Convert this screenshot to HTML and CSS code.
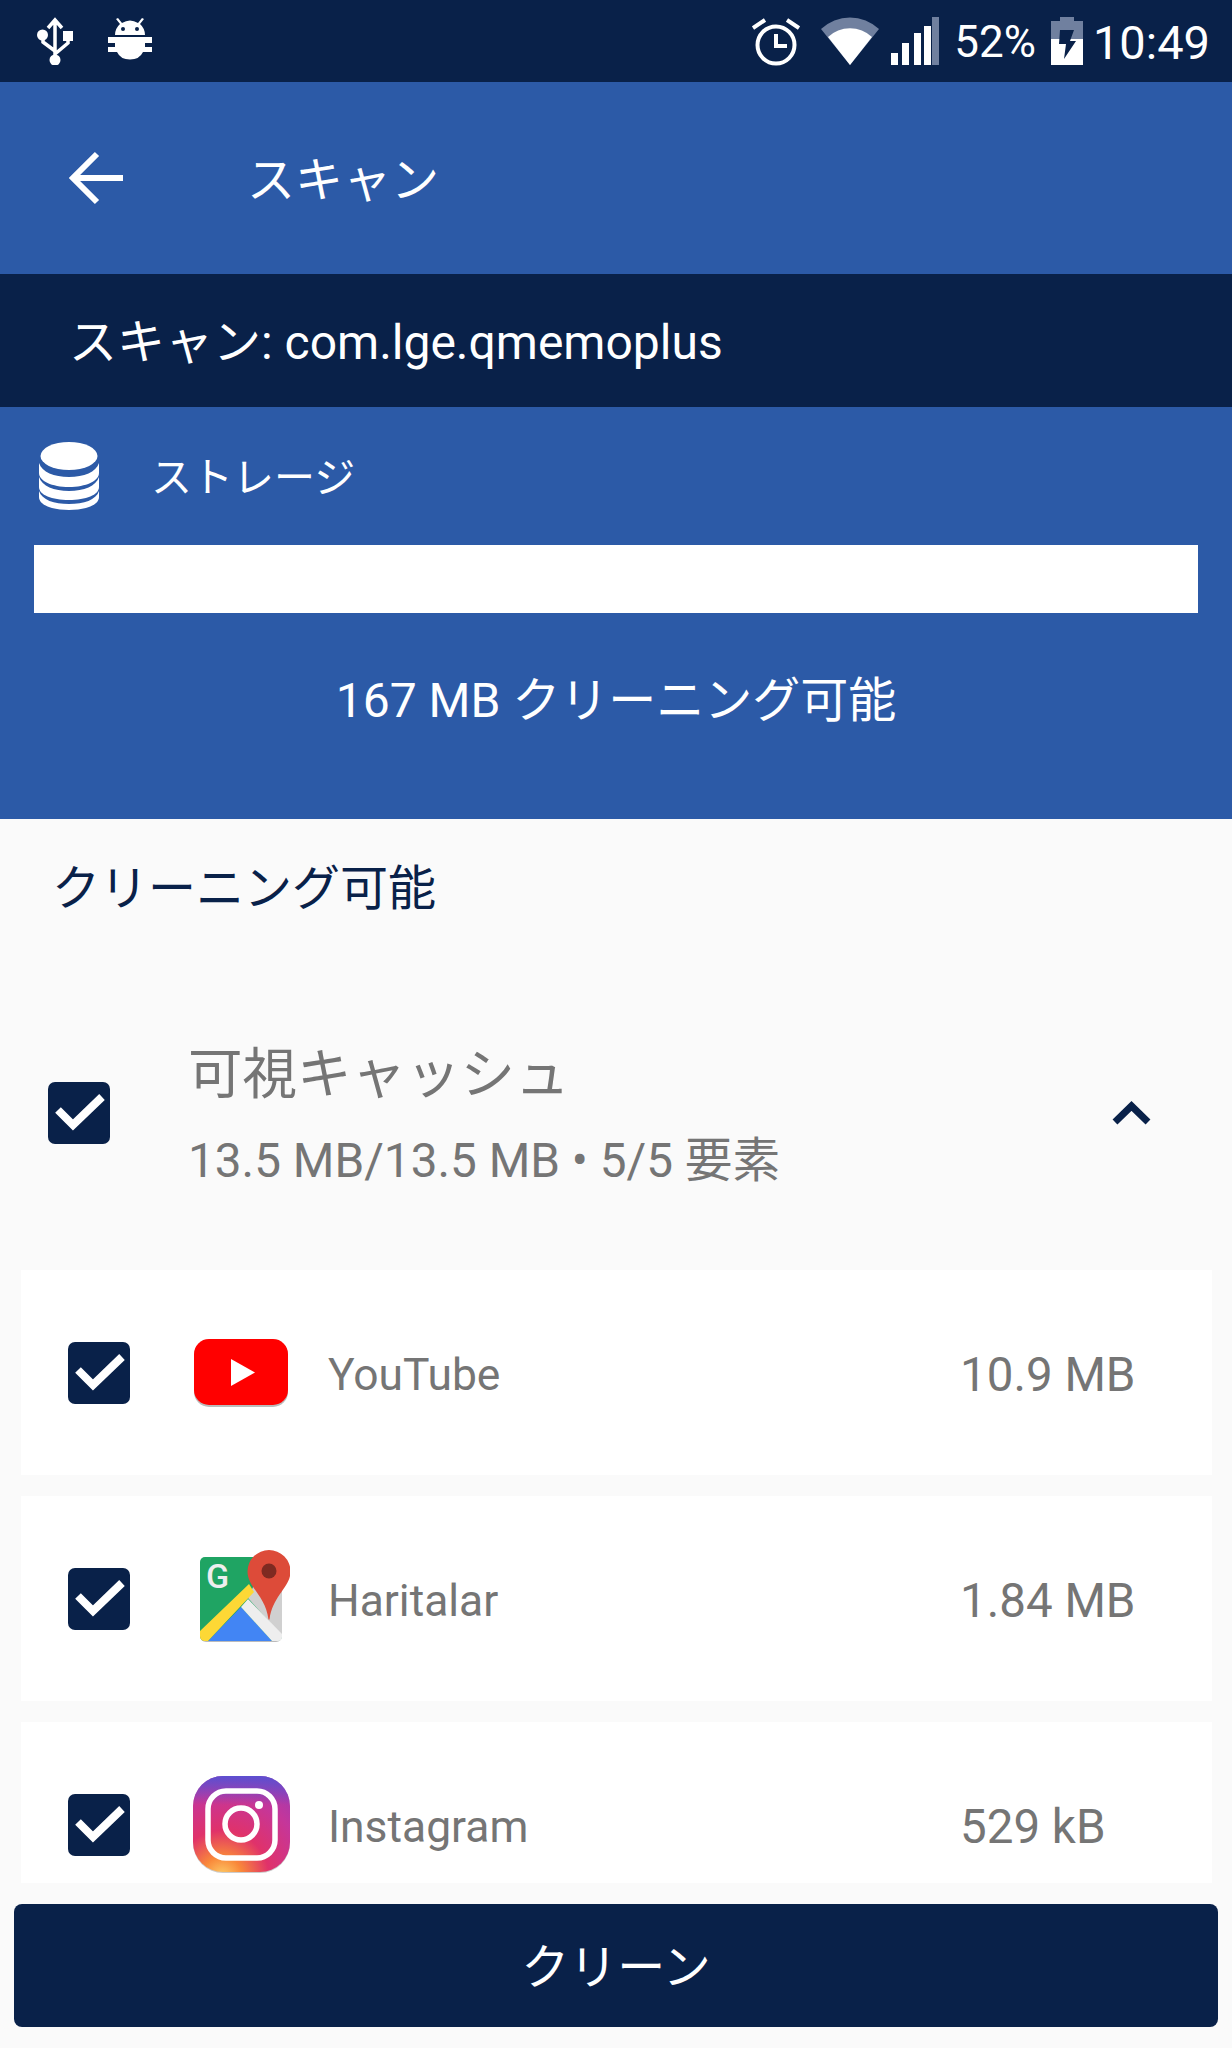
FILE: index.html
```html
<html>
<head>
<meta name="viewport" content="width=device-width, initial-scale=1">
<link rel="stylesheet" href="styles.css">
</head>
<body>
<div class="status-bar">
  <svg class="ic-usb" viewBox="0 0 36 48"><g fill="none" stroke="#fff" stroke-width="3.5"><path d="M18 4v38M11 11l7-8 7 8M6 20v5l12 9M31 22v4l-13 11"/></g><g fill="#fff"><circle cx="5.500" cy="18" r="5.500"/><rect x="26" y="14" width="10" height="10"/><circle cx="18" cy="43" r="5.500"/></g></svg>
  <svg class="ic-bug" viewBox="0 0 44 46"><g fill="#fff"><path d="M7 17a15 15 0 0 1 5-11l-4-5 2-1 4 5a15 15 0 0 1 16 0l4-5 2 1-4 5a15 15 0 0 1 5 11z"/><path d="M0 19h44v6h-7v4h7v5h-9a14 12 0 0 1-26 0h-9v-5h7v-4h-7z"/></g><circle cx="15" cy="11" r="2" fill="#092149"/><circle cx="29" cy="11" r="2" fill="#092149"/></svg>
  <div class="status-right">
    <svg class="ic-alarm" viewBox="0 0 48 49"><circle cx="24" cy="28" r="18.500" fill="none" stroke="#fff" stroke-width="4"/><path d="M24 17v12h11M1 11l12-8M47 11l-12-8" fill="none" stroke="#fff" stroke-width="4"/></svg>
    <svg class="ic-wifi" viewBox="0 0 58 48"><path d="M0 12a42 42 0 0 1 58 0l-29 36z" fill="#70809f"/><path d="M7 20a32 32 0 0 1 44 0l-22 28z" fill="#fff"/></svg>
    <svg class="ic-signal" viewBox="0 0 49 48"><path d="M0 36h7v12h-7zM11 26h7v22h-7zM23 16h7v32h-7zM33 9h7v39h-7z" fill="#fff"/><path d="M41 0h7v48h-7z" fill="#70809f"/></svg>
    <span class="pct">52%</span>
    <svg class="ic-batt" viewBox="0 0 32 48"><path d="M9 0h14v4h9v44h-32v-44h9z" fill="#70809f"/><path d="M0 22h32v26h-32z" fill="#fff"/><path d="M9 13h14l-4 11h6l-12 18 2-15h-7z" fill="#092149"/></svg>
    <span class="clock">10:49</span>
  </div>
</div>

<div class="app-bar">
  <svg class="ic-back" viewBox="0 0 54 54"><path d="M54 27h-49M28 3l-24 24 24 24" fill="none" stroke="#fff" stroke-width="6"/></svg>
  <span class="app-title">スキャン</span>
</div>

<div class="scan-band">スキャン: com.lge.qmemoplus</div>

<div class="storage">
  <div class="storage-head">
    <svg class="ic-db" viewBox="0 0 60 68"><g fill="#fff"><ellipse cx="30" cy="14" rx="28.500" ry="14"/><path d="M0 21v10c0 8 13 14 30 14s30-6 30-14v-10c-3 9-15 14-30 14s-27-5-30-14z"/><path d="M0 35v10c0 8 13 13 30 13s30-5 30-13v-10c-3 9-15 14-30 14s-27-5-30-14z"/><path d="M0 49v6c0 8 13 13 30 13s30-5 30-13v-6c-3 9-15 13-30 13s-27-4-30-13z"/></g></svg>
    <span class="storage-label">ストレージ</span>
  </div>
  <div class="storage-bar"></div>
  <div class="storage-text">167 MB クリーニング可能</div>
</div>

<div class="content">
  <div class="content-title">クリーニング可能</div>
  <div class="group">
    <svg class="check" viewBox="0 0 62 62"><rect width="62" height="62" rx="7" fill="#092149"/><path d="M10 28l15 15 29-28" fill="none" stroke="#fff" stroke-width="8"/></svg>
    <div class="group-text">
      <div class="group-name">可視キャッシュ</div>
      <div class="group-sub">13.5 MB/13.5 MB • 5/5 要素</div>
    </div>
    <svg class="ic-chevron" viewBox="0 0 39 24"><path d="M3 21l16.500-16 16.500 16" fill="none" stroke="#092149" stroke-width="7"/></svg>
  </div>

  <div class="rows">
    <div class="row">
      <svg class="check" viewBox="0 0 62 62"><rect width="62" height="62" rx="7" fill="#092149"/><path d="M10 28l15 15 29-28" fill="none" stroke="#fff" stroke-width="8"/></svg>
      <svg class="app-icon" viewBox="0 0 97 97"><rect x="1" y="16" width="94" height="67" rx="15" fill="#bbb"/><rect x="1" y="15" width="94" height="66" rx="15" fill="#f00"/><path d="M38 35l24 13.500-24 13.500z" fill="#fff"/></svg>
      <span class="row-name">YouTube</span>
      <span class="row-size">10.9 MB</span>
    </div>
    <div class="row">
      <svg class="check" viewBox="0 0 62 62"><rect width="62" height="62" rx="7" fill="#092149"/><path d="M10 28l15 15 29-28" fill="none" stroke="#fff" stroke-width="8"/></svg>
      <svg class="app-icon" viewBox="0 0 97 97">
        <rect x="7" y="8" width="82" height="84" rx="6" fill="#bbb"/>
        <rect x="7" y="7" width="82" height="84" rx="5" fill="#1fa463"/>
        <path d="M89 35v51l-34-38 6-13z" fill="#d0d0d0"/>
        <path d="M48 57l-33 34h64z" fill="#4285f4"/>
        <path d="M48 57l7-8 34 35v3a4 4 0 0 1-4 4h-6z" fill="#eee"/>
        <path d="M7 81l49-47 5 8-46 49h-4a5 5 0 0 1-4-5z" fill="#fdd835"/>
        <text class="map-g" x="13" y="38">G</text>
        <path d="M76 0a21.500 21.500 0 0 1 21.500 21.500c0 16-18 24-21 48h-1c-3-24-21-32-21-48a21.500 21.500 0 0 1 21.500-21.500z" fill="#dd4b39"/>
        <circle cx="76" cy="21" r="7.500" fill="#7e2a21"/>
      </svg>
      <span class="row-name">Haritalar</span>
      <span class="row-size">1.84 MB</span>
    </div>
    <div class="row">
      <svg class="check" viewBox="0 0 62 62"><rect width="62" height="62" rx="7" fill="#092149"/><path d="M10 28l15 15 29-28" fill="none" stroke="#fff" stroke-width="8"/></svg>
      <svg class="app-icon" viewBox="0 0 97 97">
        <defs>
          <radialGradient id="ig1" cx="0.3" cy="1.05" r="1.150">
            <stop offset="0" stop-color="#fdd06a"/>
            <stop offset="0.18" stop-color="#f9883a"/>
            <stop offset="0.42" stop-color="#e0326a"/>
            <stop offset="0.75" stop-color="#c5369a"/>
            <stop offset="1" stop-color="#a03bb0"/>
          </radialGradient>
          <linearGradient id="ig2" x1="0" y1="0" x2="0" y2="1">
            <stop offset="0" stop-color="#5c4fd0"/>
            <stop offset="0.3" stop-color="#5c4fd0" stop-opacity="0"/>
          </linearGradient>
        </defs>
        <rect x="0" y="1" width="97" height="96" rx="30" fill="#ccc"/>
        <rect x="0" y="0" width="97" height="96" rx="30" fill="url(#ig1)"/>
        <rect x="0" y="0" width="97" height="96" rx="30" fill="url(#ig2)"/>
        <rect x="15" y="15" width="67" height="67" rx="18" fill="none" stroke="#fff" stroke-width="5.5"/>
        <circle cx="48" cy="48" r="16" fill="none" stroke="#fff" stroke-width="5.5"/>
        <circle cx="66" cy="29" r="4" fill="#fff"/>
      </svg>
      <span class="row-name">Instagram</span>
      <span class="row-size">529 kB</span>
    </div>
  </div>
</div>

<div class="footer">
  <button class="clean-btn">クリーン</button>
</div>
</body>
</html>
```

FILE: styles.css
```css
* {
  box-sizing: border-box;
}

body {
  margin: 0;
  height: 2048px;
  overflow: hidden;
  display: flex;
  flex-direction: column;
  background-color: #fafafa;
  font-family: Roboto, "Noto Sans CJK JP", sans-serif;
}

svg {
  display: block;
  flex-shrink: 0;
}

.status-bar {
  height: 82px;
  display: flex;
  align-items: center;
  padding-left: 37px;
  background-color: #092149;
  color: #fff;
}

.ic-usb {
  width: 36px;
  height: 48px;
}

.ic-bug {
  width: 44px;
  height: 46px;
  margin-left: 35px;
}

.status-right {
  margin-left: auto;
  padding-right: 22px;
  display: flex;
  align-items: center;
}

.ic-alarm {
  width: 48px;
  height: 49px;
}

.ic-wifi {
  width: 58px;
  height: 48px;
  margin-left: 21px;
}

.ic-signal {
  width: 49px;
  height: 48px;
  margin-left: 12px;
}

.pct {
  font-size: 44px;
  margin-left: 14px;
  padding-top: 2px;
}

.ic-batt {
  width: 32px;
  height: 48px;
  margin-left: 15px;
}

.clock {
  font-size: 47px;
  margin-left: 10px;
  padding-top: 3px;
}

.app-bar {
  height: 192px;
  display: flex;
  align-items: center;
  padding: 0 0 0 69px;
  background-color: #2c5aa7;
  color: #fff;
}

.ic-back {
  width: 54px;
  height: 54px;
}

.app-title {
  font-size: 48px;
  margin: 0 0 5px 124px;
}

.scan-band {
  height: 133px;
  display: flex;
  align-items: center;
  padding: 0 0 5px 69px;
  background-color: #092149;
  color: #fff;
  font-size: 48px;
}

.storage {
  height: 412px;
  padding: 35px 34px 0;
  background-color: #2c5aa7;
  color: #fff;
}

.storage-head {
  height: 68px;
  display: flex;
  align-items: center;
  padding-left: 5px;
}

.ic-db {
  width: 60px;
  height: 68px;
}

.storage-label {
  font-size: 41px;
  margin: 0 0 5px 52px;
}

.storage-bar {
  height: 68px;
  margin-top: 35px;
  background-color: #fff;
}

.storage-text {
  margin-top: 48px;
  text-align: center;
  font-size: 48px;
}

.content {
  flex: 1;
  min-height: 0;
  overflow: hidden;
  display: flex;
  flex-direction: column;
}

.content-title {
  padding: 30px 0 0 52px;
  font-size: 48px;
  color: #092149;
}

.group {
  display: flex;
  align-items: center;
  margin-top: 110px;
  padding: 0 81px 0 48px;
}

.group-text {
  margin: 1px 0 6px 78px;
}

.group-name {
  font-size: 54.5px;
  color: #757575;
}

.group-sub {
  margin-top: 13px;
  font-size: 47.7px;
  color: #757575;
}

.ic-chevron {
  width: 39px;
  height: 24px;
  margin-left: auto;
}

.check {
  width: 62px;
  height: 62px;
}

.rows {
  flex: 1;
  min-height: 0;
  overflow: hidden;
  margin-top: 73px;
  padding: 0 20px 0 21px;
  display: flex;
  flex-direction: column;
  gap: 21px;
}

.row {
  height: 205px;
  flex-shrink: 0;
  display: flex;
  align-items: center;
  padding-left: 47px;
  background-color: #fff;
  color: #757575;
  font-size: 44.4px;
}

.app-icon {
  width: 97px;
  height: 97px;
  margin-left: 63px;
}

.row-name {
  margin-left: 38px;
  padding-top: 5px;
}

.row-size {
  margin-left: auto;
  width: 252px;
  padding-top: 5px;
  font-size: 47.5px;
}

.map-g {
  font-family: Roboto, sans-serif;
  font-size: 34px;
  font-weight: 500;
  fill: #eeeeee;
}

.footer {
  padding: 21px 14px;
}

.clean-btn {
  display: block;
  width: 100%;
  height: 123px;
  padding: 0 0 5px;
  border: none;
  border-radius: 8px;
  background-color: #092149;
  color: #fff;
  font-family: Roboto, "Noto Sans CJK JP", sans-serif;
  font-size: 48px;
}
```
